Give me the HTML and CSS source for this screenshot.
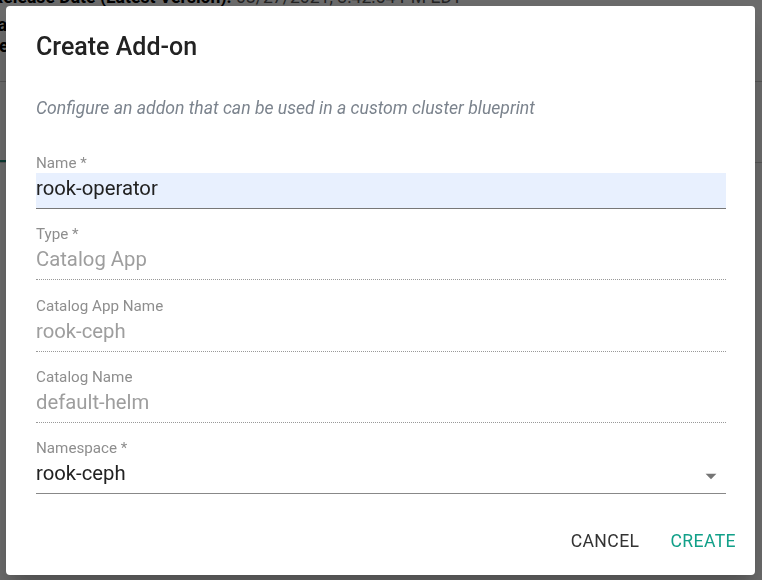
FILE: index.html
```html
<!DOCTYPE html>
<html lang="en">

<head>
    <meta charset="UTF-8">
    <title>Create Add-on</title>

    <link rel="stylesheet" href="styles.css">
</head>

<body>

    <!-- siden bag dialogen -->
    <main class="side">
        <p class="release"><b>Release Date (Latest Version):</b> <span>08/27/2021, 3:42:54 PM EDT</span></p>
        <p class="linje data">Data</p>
        <p class="linje type">Type</p>
        <div class="skille"></div>
        <div class="faner"><div class="fane"></div></div>
    </main>

    <div class="backdrop"></div>

    <section class="dialog">
        <h2>Create Add-on</h2>
        <p class="beskrivelse">Configure an addon that can be used in a custom cluster blueprint</p>

        <form>
            <label class="felt aktiv">
                <span class="etiket">Name *</span>
                <input type="text" value="rook-operator">
            </label>

            <label class="felt laast">
                <span class="etiket">Type *</span>
                <span class="vaerdi">Catalog App</span>
            </label>

            <label class="felt laast">
                <span class="etiket">Catalog App Name</span>
                <span class="vaerdi">rook-ceph</span>
            </label>

            <label class="felt laast">
                <span class="etiket">Catalog Name</span>
                <span class="vaerdi">default-helm</span>
            </label>

            <label class="felt valg">
                <span class="etiket">Namespace *</span>
                <span class="vaerdi">rook-ceph
                    <svg width="26" height="26" viewBox="0 0 24 24"><path d="M7 10l5 5 5-5z" fill="#757575"/></svg>
                </span>
            </label>
        </form>

        <nav class="knapper">
            <button class="annuller">Cancel</button>
            <button class="opret">Create</button>
        </nav>
    </section>

</body>

</html>
```

FILE: styles.css
```css
body {
    margin: 0;
    font-family: Roboto, "Liberation Sans", sans-serif;
    background: #fff;
    overflow: hidden;
    height: 580px;
}

.side {
    margin: -13px 0 0 -8px;
}

.side p {
    margin: 0;
    font-size: 17.6px;
    line-height: 21px;
    white-space: nowrap;
}

.release span {
    color: #555;
}

.linje {
    font-weight: 700;
}

.data {
    margin-top: 7px !important;
    text-indent: -21px;
}

.type {
    line-height: 20px !important;
    text-indent: -22px;
}

.skille {
    margin-top: 25px;
    border-top: 1px solid #ccc;
}

.faner {
    margin-top: 78px;
    border-bottom: 1px solid #ccc;
}

.fane {
    width: 40px;
    border-top: 2px solid #1a8b7a;
}

.backdrop {
    position: fixed;
    inset: 0;
    background: rgba(0, 0, 0, 0.58);
}

.dialog {
    position: fixed;
    top: 6px;
    left: 6px;
    width: 749px;
    height: 569px;
    box-sizing: border-box;
    background: #fff;
    border-radius: 4px;
    padding: 25px 30px 0 30px;
    display: flex;
    flex-direction: column;
    box-shadow: 0 11px 15px -7px rgba(0, 0, 0, 0.2), 0 24px 38px 3px rgba(0, 0, 0, 0.14);
}

h2 {
    margin: 0;
    font-size: 25px;
    font-weight: 500;
    color: #222;
    line-height: 32px;
}

.beskrivelse {
    margin: 35px 0 0 0;
    font-style: italic;
    font-size: 17.6px;
    color: #7b838d;
    line-height: 20px;
}

form {
    margin-top: 35px;
    display: flex;
    flex-direction: column;
    gap: 15.25px;
}

.felt {
    display: flex;
    flex-direction: column;
    width: 690px;
}

.etiket {
    font-size: 15.2px;
    line-height: 20px;
    color: #8e8e8e;
}

.felt input,
.vaerdi {
    font: inherit;
    font-size: 20.3px;
    height: 36px;
    line-height: 31px;
    padding: 0;
    border: 0;
    box-sizing: border-box;
    color: #222;
}

.felt input {
    background: #e8f0fe;
    border-bottom: 1px solid #777;
    padding-bottom: 5px;
    outline: none;
}

.laast .vaerdi {
    color: #9e9e9e;
    border-bottom: 1px dotted #999;
}

.valg .vaerdi {
    display: flex;
    justify-content: space-between;
    align-items: flex-start;
    border-bottom: 1px solid #888;
}

.valg svg {
    margin: 5px 2px 0 0;
}

.knapper {
    margin-top: auto;
    margin-bottom: 18px;
    display: flex;
    justify-content: flex-end;
    gap: 15px;
    margin-right: -19px;
}

.knapper button {
    font: inherit;
    font-size: 17.6px;
    text-transform: uppercase;
    background: none;
    border: 0;
    padding: 6px 8px;
    letter-spacing: 0.4px;
}

.annuller {
    color: #333;
}

.opret {
    color: #12a089;
}
```
